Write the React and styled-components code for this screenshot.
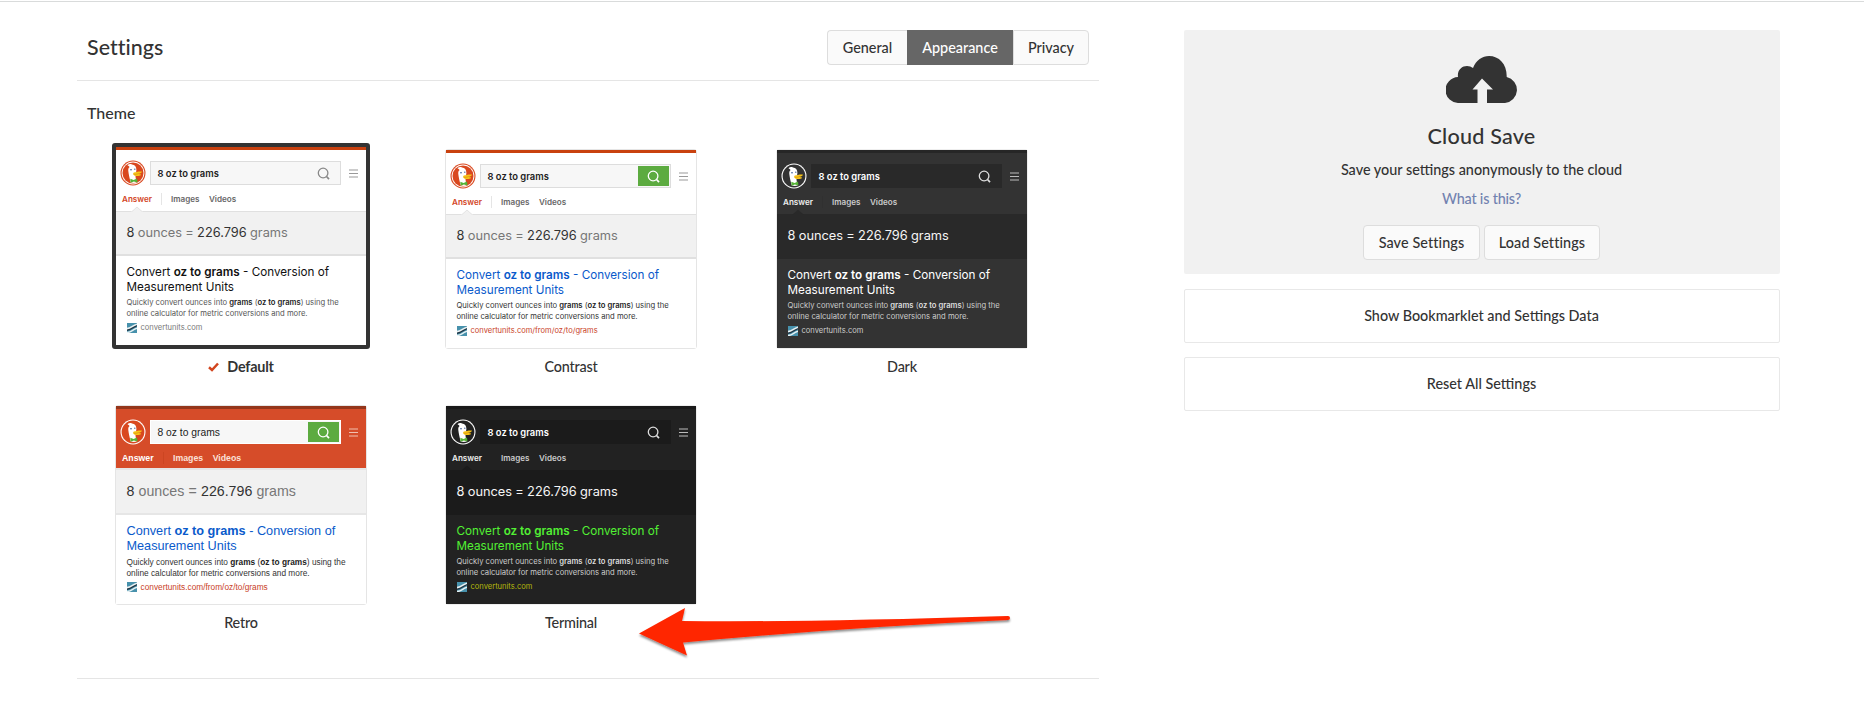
import React from "react";
import styled, { createGlobalStyle, css } from "styled-components";

const GlobalStyle = createGlobalStyle`
  *, *::before, *::after { box-sizing: border-box; }
  body {
    margin: 0;
    background: #fff;
    color: #333;
    font-family: Lato, "Liberation Sans", sans-serif;
    font-size: 14.4px;
    font-weight: 500;
  }
  h1, h2, p { margin: 0; font-weight: 500; }
  button { font: inherit; color: inherit; }
`;

const Page = styled.div`
  position: relative;
  display: flex;
  align-items: flex-start;
  height: 700px;
  margin-top: 1px;
  border-top: 1px solid #d9dbdb;
  padding: 28px 84px 0 77px;
  overflow: hidden;
`;

const Main = styled.main`
  width: 1022px;
  margin-right: 85px;
`;

const Header = styled.header`
  display: flex;
  justify-content: space-between;
  height: 51px;
  padding: 0 10px;
  border-bottom: 1px solid #e5e5e5;
`;

const Title = styled.h1`
  font-size: 21.4px;
  line-height: 34px;
  letter-spacing: 0.05px;
`;

const Tabs = styled.nav`
  display: flex;
  height: 35px;
`;

const Tab = styled.button`
  width: ${(p) => p.$width}px;
  padding: 0 0 1px;
  border: 1px solid ${(p) => (p.$active ? "#666" : "#ddd")};
  background: ${(p) => (p.$active ? "#666" : "#fafafa")};
  color: ${(p) => (p.$active ? "#fff" : "#333")};
  &:first-child { border-right: 0; border-radius: 4px 0 0 4px; }
  &:last-child { border-radius: 0 4px 4px 0; }
`;

const ThemeSection = styled.section`
  height: 598px;
  border-bottom: 1px solid #e5e5e5;
`;

const SectionTitle = styled.h2`
  height: 62px;
  padding: 22px 10px 0;
  font-size: 16px;
  line-height: 20px;
`;

const ThemeGrid = styled.div`
  display: grid;
  grid-template-columns: 330px 330px 332px;
  grid-auto-rows: 256px;
  margin-left: -1px;
`;

const ThemeOption = styled.div`
  display: flex;
  flex-direction: column;
  align-items: center;
`;

const Frame = styled.div`
  flex: none;
  border-radius: 3px;
  ${(p) =>
    p.$selected
      ? css`border: 4px solid #333;`
      : css`margin-top: 6px; border: 1px solid ${p.$edge}; `}
`;

const ThemeName = styled.div`
  display: flex;
  align-items: center;
  gap: 8px;
  margin-top: 8px;
  line-height: 20px;
  font-weight: ${(p) => (p.$selected ? 700 : 500)};
  letter-spacing: -0.2px;
`;

const Preview = styled.div`
  width: 250px;
  height: 198px;
  overflow: hidden;
  background: ${(p) => p.$t.body};
  font-family: ${(p) => p.$t.font};
  font-weight: 400;
  b { font-weight: ${(p) => p.$t.bold}; }
`;

const PreviewHeader = styled.div`
  height: ${(p) => p.$t.headerHeight}px;
  border-top: 3px solid ${(p) => p.$t.bar};
  background: ${(p) => p.$t.header};
`;

const SearchRow = styled.div`
  display: flex;
  align-items: center;
  height: 36px;
  padding: 10px 0 0 4px;
`;

const SearchBox = styled.div`
  display: flex;
  align-items: center;
  width: 191px;
  height: 24px;
  margin: 0 8px 0 4px;
  padding: 0 1px 0 6.5px;
  border: 1px solid ${(p) => p.$t.fieldEdge};
  background: ${(p) => p.$t.field};
  color: ${(p) => p.$t.fieldText};
  font-size: ${(p) => p.$t.querySize}px;
  font-weight: ${(p) => p.$t.queryWeight};
  white-space: nowrap;
`;

const SearchButton = styled.span`
  display: flex;
  align-items: center;
  justify-content: center;
  width: 31px;
  height: 20px;
  margin-left: auto;
  background: ${(p) => p.$t.button};
`;

const LinkRow = styled.div`
  display: flex;
  align-items: center;
  height: 25px;
  padding: 0 0 0 6px;
  color: ${(p) => p.$t.links};
  font-size: ${(p) => p.$t.linkSize}px;
  font-weight: ${(p) => p.$t.bold};
`;

const ActiveLink = styled.span`
  position: relative;
  width: ${(p) => p.$t.activeWidth}px;
  height: 12px;
  margin-right: 9px;
  border-right: 1px solid ${(p) => p.$t.separator};
  line-height: 12px;
  color: ${(p) => p.$t.active};
`;

const Notch = styled.svg`
  position: absolute;
  left: 9px;
  top: 13px;
`;

const Link = styled.span`
  margin-right: 9.5px;
`;

const Answer = styled.div`
  display: flex;
  align-items: center;
  gap: ${(p) => p.$t.answerGap}px;
  height: ${(p) => 109 - p.$t.headerHeight}px;
  padding: 0 10.5px 1px;
  border: solid ${(p) => p.$t.answerEdge};
  border-width: ${(p) => p.$t.answerTop}px 0 2px;
  background: ${(p) => p.$t.answer};
  color: ${(p) => p.$t.answerText};
  font-size: ${(p) => p.$t.answerSize}px;
`;

const Muted = styled.span`
  color: ${(p) => p.$t.answerMuted};
`;

const Result = styled.div`
  padding: 9px 0 0 10.5px;
  white-space: nowrap;
`;

const ResultTitle = styled.div`
  color: ${(p) => p.$t.title};
  font-size: ${(p) => p.$t.titleSize}px;
  line-height: 15.3px;
`;

const Snippet = styled.div`
  margin-top: 2.5px;
  color: ${(p) => p.$t.snippet};
  font-size: ${(p) => p.$t.snippetSize}px;
  line-height: 10.7px;
  b { color: ${(p) => p.$t.snippetBold}; }
`;

const Source = styled.div`
  display: flex;
  align-items: center;
  gap: 4px;
  margin-top: 3px;
  color: ${(p) => p.$t.url};
  font-size: ${(p) => p.$t.urlSize}px;
  line-height: 10px;
`;

const Sidebar = styled.aside`
  display: flex;
  flex-direction: column;
  width: 596px;
`;

const CloudPanel = styled.section`
  display: flex;
  flex-direction: column;
  align-items: center;
  height: 244px;
  margin-bottom: 15px;
  padding: 26px 1px 0 0;
  border-radius: 2px;
  background: #f1f1f1;
`;

const CloudTitle = styled.h2`
  margin-top: 18px;
  font-size: 21.6px;
  line-height: 30px;
  letter-spacing: 0.2px;
`;

const CloudText = styled.p`
  margin-top: 9px;
  line-height: 20px;
`;

const CloudLink = styled.a`
  margin-top: 9px;
  color: #7182b0;
  line-height: 20px;
  letter-spacing: -0.2px;
`;

const ButtonRow = styled.div`
  display: flex;
  gap: 4px;
  margin-top: 16px;
`;

const Button = styled.button`
  width: ${(p) => p.$width}px;
  height: 35px;
  padding: 0 0 1px;
  border: 1px solid #ddd;
  border-radius: 4px;
  background: #fafafa;
  letter-spacing: 0.1px;
`;

const WideButton = styled.button`
  height: 54px;
  margin-bottom: 14px;
  padding: 0 1px 2px 0;
  border: 1px solid #e8e8e8;
  border-radius: 2px;
  background: #fff;
`;

const PointerArrow = styled.svg`
  position: absolute;
  left: 630px;
  top: 598px;
`;

const light = {
  font: 'Inter, "Liberation Sans", sans-serif', bold: 600,
  edge: "#e5e5e5", body: "#fff", bar: "#c9410f", header: "#fff", headerHeight: 64,
  field: "#f7f7f7", fieldEdge: "#ddd", fieldText: "#222", queryWeight: 600, querySize: 9.4,
  button: "transparent", glass: "#888", menu: "#999",
  links: "#666", active: "#d2451e", separator: "#e5e5e5", linkSize: 8.1, activeWidth: 40,
  answer: "#f1f1f1", answerEdge: "#e0e0e0", answerTop: 1, answerText: "#333", answerMuted: "#777",
  answerSize: 12.8, answerGap: 3.3,
  title: "#111", titleSize: 11.7,
  snippet: "#555", snippetBold: "#222", snippetSize: 7.65, url: "#777", urlSize: 7.55,
  logoDisc: "#d9481f", logoRing: "#d9481f", domain: "convertunits.com",
};

const dark = {
  ...light, edge: "#eee", body: "#333", bar: "#262626", header: "#333",
  field: "#292929", fieldEdge: "#292929", fieldText: "#fff", glass: "#ddd", menu: "#bbb",
  links: "#ccc", active: "#eee", separator: "#303030",
  answer: "#292929", answerEdge: "#292929", answerText: "#f5f5f5", answerMuted: "#f5f5f5",
  title: "#fff", snippet: "#ccc", snippetBold: "#ddd", url: "#ccc",
  logoDisc: "#333", logoRing: "#fff",
};

const contrast = {
  ...light, button: "#5cab40", glass: "#fff", title: "#0a5acb", snippet: "#333",
  url: "#c9411f", domain: "convertunits.com/from/oz/to/grams",
};

const themes = [
  { name: "Default", selected: true, t: light },
  { name: "Contrast", t: contrast },
  { name: "Dark", t: dark },
  {
    name: "Retro",
    t: {
      ...contrast, font: '"Liberation Sans", sans-serif', bold: 700,
      bar: "#94361b", header: "#d64c29", headerHeight: 62,
      fieldEdge: "#fff", queryWeight: 400, querySize: 10.3, menu: "#f0c0b0", links: "#fbe0d8", active: "#fff",
      separator: "#cc4522", linkSize: 8.75, activeWidth: 42, answerTop: 2, answerEdge: "#e6e6e6",
      answerSize: 14.2, answerGap: 4.2,
      titleSize: 12.7, snippetSize: 8.3, urlSize: 8.3, logoRing: "#fff",
    },
  },
  {
    name: "Terminal",
    t: {
      ...dark, body: "#222", bar: "#1a1a1a", header: "#222", field: "#1b1b1b", fieldEdge: "#1b1b1b",
      separator: "#222", answer: "#1b1b1b", answerEdge: "#1b1b1b", title: "#52f034", url: "#b5b80c", logoDisc: "#222",
    },
  },
];

function DuckLogo({ t }) {
  const plain = t.logoRing !== "#fff";
  return (
    <svg width="26" height="26" viewBox="0 0 26 26">
      <circle cx="13" cy="13" r="12.5" fill={t.logoRing} />
      <circle cx="13" cy="13" r="11.4" fill={plain ? "#fff" : t.logoDisc} />
      {plain && <circle cx="13" cy="13" r="10.5" fill={t.logoDisc} />}
      <path
        d="M7.500 5.200c1.300-1.200 2.900-1.500 4.500-.7 2.800.3 4.400 2.200 4.400 5.200 0 2.400-1.200 4.300-.9 6.500.2 2.600.7 4.700 1.200 6.300-2 .7-4.100.6-6 0-1-3.500-2.100-8.700-2.400-11.500-.2-2 .2-3.300 1.300-4.100-.6-.5-1.300-1.200-2.100-1.700z"
        fill="#fff"
      />
      <circle cx="11" cy="9.700" r=".8" fill="#2d4f8e" />
      <circle cx="14.800" cy="9.200" r=".65" fill="#2d4f8e" />
      <path d="M13.800 12.600c2-.5 5.500-1.500 8-1 .4 1.300-2.600 2.200-3.800 2.500 1.200.2 2.600.2 3 .6-.6 1.500-4.500 1.700-6.300 1.100-1.700-.6-2.200-2.400-.9-3.200z" fill="#f8c418" />
      <path d="M13.900 14.200c2 .3 3-.1 4.500-.5" stroke="#c98b14" strokeWidth=".6" fill="none" />
      <path d="M10.300 18.800l3.300 1.300 3.400-1.500.5 3.800-3.600-1-3.300 1.400z" fill="#55b336" />
    </svg>
  );
}

function Glass({ color }) {
  return (
    <svg width="13" height="13" viewBox="0 0 13 13" fill="none" stroke={color} strokeWidth="1.3">
      <circle cx="6.100" cy="6" r="4.800" />
      <path d="M9.500 9.500l2.500 2.600" strokeWidth="1.700" />
    </svg>
  );
}

function Menu({ color }) {
  return (
    <svg width="9" height="9" viewBox="0 0 9 9" stroke={color} strokeWidth="1.200">
      <path d="M0 1h9M0 4.500h9M0 8h9" />
    </svg>
  );
}

function Favicon() {
  return (
    <svg width="10" height="10" viewBox="0 0 10 10">
      <rect width="10" height="10" fill="#4791ac" />
      <path d="M0 5.400C4 4.800 6 2.200 10 .8v2.400C6 5 4 7.400 0 8z" fill="#1f3443" />
      <path d="M0 4.800C4 4.200 6 1.600 10 .6v1.500C6 3.400 4 6 0 6.400zM0 8.800c4-.6 6-3.200 10-4.400v1.500C6.500 7 4.500 9.200 2 10H0z" fill="#e8f1f3" />
    </svg>
  );
}

function ThemePreview({ t }) {
  return (
    <Preview $t={t}>
      <PreviewHeader $t={t}>
        <SearchRow>
          <DuckLogo t={t} />
          <SearchBox $t={t}>
            8 oz to grams
            <SearchButton $t={t}><Glass color={t.glass} /></SearchButton>
          </SearchBox>
          <Menu color={t.menu} />
        </SearchRow>
        <LinkRow $t={t}>
          <ActiveLink $t={t}>
            Answer
            {t.headerHeight === 64 && (
              <Notch width="12" height="7" viewBox="0 0 12 7">
                <path d="M0 6L6 1l6 5v1H0z" fill={t.answer} />
                <path d="M1 5.500L6 1l5 4.500" fill="none" stroke={t.answerEdge} strokeWidth=".8" />
              </Notch>
            )}
          </ActiveLink>
          <Link>Images</Link>
          <Link>Videos</Link>
        </LinkRow>
      </PreviewHeader>
      <Answer $t={t}>
        <span>8</span>
        <Muted $t={t}>ounces</Muted>
        <Muted $t={t}>=</Muted>
        <span>226.796</span>
        <Muted $t={t}>grams</Muted>
      </Answer>
      <Result>
        <ResultTitle $t={t}>
          Convert <b>oz to grams</b> - Conversion of
          <br />
          Measurement Units
        </ResultTitle>
        <Snippet $t={t}>
          Quickly convert ounces into <b>grams</b> (<b>oz to grams</b>) using the
          <br />
          online calculator for metric conversions and more.
        </Snippet>
        <Source $t={t}>
          <Favicon />
          {t.domain}
        </Source>
      </Result>
    </Preview>
  );
}

function CloudUpload() {
  return (
    <svg width="72" height="47" viewBox="0 0 72 47" fill="#333">
      <path d="M13 47A13 13 0 0 1 12 21C11 14 16 10 21 10Q24.500 10 27 12C30 4 36.500 0 43 0 53 0 61 8 60.700 21A13.200 13.200 0 0 1 59 47H41V33.500h6L36 22.500 26.500 33.500H31.500V47z" />
    </svg>
  );
}

function Check() {
  return (
    <svg width="11" height="10" viewBox="0 0 11 10">
      <path d="M1 5.300l3 2.700 6-6.500" fill="none" stroke="#d2451e" strokeWidth="2.500" />
    </svg>
  );
}

export default function App() {
  return (
    <>
      <GlobalStyle />
      <Page>
        <Main>
          <Header>
            <Title>Settings</Title>
            <Tabs>
              <Tab $width={80}>General</Tab>
              <Tab $width={106} $active>Appearance</Tab>
              <Tab $width={76}>Privacy</Tab>
            </Tabs>
          </Header>
          <ThemeSection>
            <SectionTitle>Theme</SectionTitle>
            <ThemeGrid>
              {themes.map(({ name, selected, t }) => (
                <ThemeOption key={name}>
                  <Frame $selected={selected} $edge={t.edge}>
                    <ThemePreview t={t} />
                  </Frame>
                  <ThemeName $selected={selected}>
                    {selected && <Check />}
                    {name}
                  </ThemeName>
                </ThemeOption>
              ))}
            </ThemeGrid>
          </ThemeSection>
        </Main>
        <Sidebar>
          <CloudPanel>
            <CloudUpload />
            <CloudTitle>Cloud Save</CloudTitle>
            <CloudText>Save your settings anonymously to the cloud</CloudText>
            <CloudLink>What is this?</CloudLink>
            <ButtonRow>
              <Button $width={117}>Save Settings</Button>
              <Button $width={116}>Load Settings</Button>
            </ButtonRow>
          </CloudPanel>
          <WideButton>Show Bookmarklet and Settings Data</WideButton>
          <WideButton>Reset All Settings</WideButton>
        </Sidebar>
        <PointerArrow width="390" height="70" viewBox="630 600 390 70">
          <defs>
            <filter id="arrowShadow" x="-5%" y="-20%" width="110%" height="150%">
              <feDropShadow dx="0" dy="2" stdDeviation="1.200" floodColor="#000" floodOpacity=".45" />
            </filter>
          </defs>
          <path
            d="M639 633.500L685 608L682 621Q800 622.500 1008 616Q1010 616 1010 618Q1010 620 1008 620Q850 627 683 642.500L687 655.500Z"
            fill="#ff2600"
            filter="url(#arrowShadow)"
          />
        </PointerArrow>
      </Page>
    </>
  );
}
